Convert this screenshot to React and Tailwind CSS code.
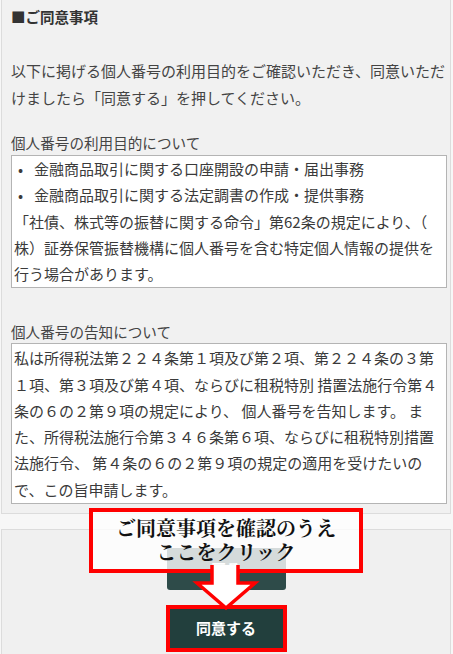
const sans = { fontFamily: '"Noto Sans CJK JP", "Noto Sans", sans-serif' }

const box1Lines = [
  '「社債、株式等の振替に関する命令」第62条の規定により、（',
  '株）証券保管振替機構に個人番号を含む特定個人情報の提供を',
  '行う場合があります。',
]

const box2Lines = [
  '私は所得税法第２２４条第１項及び第２項、第２２４条の３第',
  '１項、第３項及び第４項、ならびに租税特別 措置法施行令第４',
  '条の６の２第９項の規定により、 個人番号を告知します。 ま',
  'た、所得税法施行令第３４６条第６項、ならびに租税特別措置',
  '法施行令、 第４条の６の２第９項の規定の適用を受けたいの',
  'で、この旨申請します。',
]

function Callout() {
  return (
    <>
      <div className="absolute left-[89px] top-[508px] flex h-[65px] w-[274px] flex-col items-center border-4 border-[#ff0000] bg-white/80 pt-[4px] text-[20px] font-bold leading-[24px] text-[#111]"
        style={{ fontFamily: '"Noto Serif CJK JP", "Noto Sans CJK JP", serif' }}>
        <div className="whitespace-nowrap">ご同意事項を確認のうえ</div>
        <div className="whitespace-nowrap">ここをクリック</div>
      </div>
      <svg className="absolute left-[192px] top-[565px]" width="68" height="46" viewBox="192 565 68 46">
        <path
          d="M212 565 L212 583 L197 583 L226 608 L255 583 L238 583 L238 565"
          fill="#ffffff"
          stroke="#ff0000"
          strokeWidth="3.5"
          strokeLinejoin="miter"
        />
      </svg>
    </>
  )
}

export default function App() {
  return (
    <div className="relative h-[654px] w-[453px] overflow-hidden bg-[#f7f7f7] text-[#333]" style={sans}>
      <div className="ml-[1px] h-[514px] w-[450px] border-x border-b border-[#dcdcdc] bg-[#f1f1f1] pl-[9px] pr-[3px] pt-[7px]">
        <div className="text-[14.5px] font-bold leading-[20px] text-[#333]">■ご同意事項</div>
        <p className="mt-[31px] text-[15px] leading-[26.5px] text-[#444]">
          以下に掲げる個人番号の利用目的をご確認いただき、同意いただ
          <br />
          けましたら「同意する」を押してください。
        </p>
        <div className="mt-[21px] text-[14.6px] leading-[22px] text-[#444]">個人番号の利用目的について</div>
        <div className="mt-[1px] border border-[#b4b4b4] bg-white pl-[2px] text-[15px] leading-[26.3px] text-[#3a3a3a]">
          <div className="flex whitespace-nowrap">
            <span className="w-[20px] pl-[4px]">•</span>
            <span>金融商品取引に関する口座開設の申請・届出事務</span>
          </div>
          <div className="flex whitespace-nowrap">
            <span className="w-[20px] pl-[4px]">•</span>
            <span>金融商品取引に関する法定調書の作成・提供事務</span>
          </div>
          {box1Lines.map((l) => (
            <div key={l} className="whitespace-nowrap">{l}</div>
          ))}
        </div>
        <div className="mt-[33px] text-[14.6px] leading-[22px] text-[#444]">個人番号の告知について</div>
        <div className="border border-[#b4b4b4] bg-white pl-[2px] pt-[1px] text-[15px] leading-[26.2px] text-[#3a3a3a]">
          {box2Lines.map((l) => (
            <div key={l} className="whitespace-pre">{l}</div>
          ))}
        </div>
      </div>
      <div className="h-[15px]" />
      <div className="ml-[1px] flex h-[200px] w-[450px] flex-col items-center border-x border-t border-[#dcdcdc] bg-[#f0f0f0] pt-[18px]">
        <button className="flex h-[42px] w-[119px] items-center justify-center rounded-[3px] bg-[#2e4b49] text-[15px] font-bold text-white">
          戻る
        </button>
        <div className="relative mt-[17px]">
          <button className="flex h-[43px] w-[117px] items-center justify-center rounded-[3px] bg-[#223f3d] text-[15px] font-bold text-white">
            同意する
          </button>
          <span className="absolute -inset-[2px] border-4 border-[#ff0000]" />
        </div>
      </div>
      <Callout />
    </div>
  )
}
